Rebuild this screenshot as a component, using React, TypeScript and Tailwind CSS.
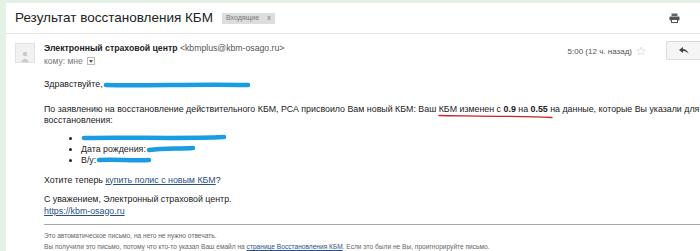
const font = "font-['Liberation_Sans',Arial,sans-serif]";

const Scribble = ({ w, d }: { w: number; d: string }) => (
  <svg width={w} height="8" viewBox={`0 0 ${w} 8`} className="inline-block align-middle">
    <path d={d} stroke="#1a9be2" strokeWidth="4.5" strokeLinecap="round" fill="none" />
  </svg>
);

const PrintIcon = () => (
  <svg width="11" height="10" viewBox="0 0 11 10">
    <rect x="2.5" y="0.5" width="6" height="2.5" fill="#666" />
    <rect x="0.5" y="3.5" width="10" height="4" rx="0.8" fill="#555" />
    <rect x="2.5" y="6.5" width="6" height="3" fill="#fff" stroke="#555" strokeWidth="1" />
  </svg>
);

const App = () => {
  return (
    <div className={`w-[700px] h-[251px] overflow-hidden bg-[#e4f1e6] pl-[6px] pt-[3px] ${font}`}>
      <div className="h-full bg-white">
        <div className="flex h-[31px] items-center border-b border-[#e6e6e6] pl-[9px] pr-[20px]">
          <span className="text-[13.5px] text-[#222]">Результат восстановления КБМ</span>
          <span className="ml-[9px] flex h-[11px] items-center gap-[8px] bg-[#dddddd] px-[4px] text-[7px] text-[#777]">
            Входящие <span className="text-[7px]">x</span>
          </span>
          <span className="ml-auto">
            <PrintIcon />
          </span>
        </div>

        <div className="flex pl-[9px] pt-[9px]">
          <div className="flex h-[20px] w-[20px] shrink-0 items-end justify-center border border-[#e2e2e2] bg-[#f1f1f1]">
            <svg width="10" height="12" viewBox="0 0 10 12">
              <circle cx="5" cy="4" r="2.2" fill="#c9c9c9" />
              <path d="M1.5 12 C1.5 8 8.5 8 8.5 12 Z" fill="#c9c9c9" />
            </svg>
          </div>

          <div className="ml-[9px] min-w-0 flex-1">
            <div className="-mt-[1px] flex items-start">
              <div>
                <div className="text-[8.7px] leading-[12px] text-[#222]">
                  <span className="font-bold">Электронный страховой центр</span>{" "}
                  <span className="text-[#555]">&lt;kbmplus@kbm-osago.ru&gt;</span>
                </div>
                <div className="mt-[1px] flex items-center gap-[4px] text-[8.5px] leading-[12px] text-[#777]">
                  кому: мне
                  <span className="flex h-[8px] w-[8px] items-center justify-center border border-[#bbb] bg-white">
                    <svg width="4" height="3" viewBox="0 0 4 3">
                      <path d="M0 0 H4 L2 3 Z" fill="#555" />
                    </svg>
                  </span>
                </div>
              </div>
              <div className="ml-auto flex shrink-0 items-center">
                <span className="pt-[1px] text-[8px] text-[#555]">5:00 (12 ч. назад)</span>
                <svg width="10" height="10" viewBox="0 0 24 24" className="ml-[4px]">
                  <path
                    d="M12 2.5l2.9 6.4 6.9.6-5.2 4.6 1.6 6.8L12 17.3l-6.2 3.6 1.6-6.8-5.2-4.6 6.9-.6z"
                    fill="none"
                    stroke="#d6d6d6"
                    strokeWidth="1.6"
                  />
                </svg>
                <div className="-mt-[1px] ml-[20px] flex h-[19px] w-[34px] items-center justify-center rounded-l-[2px] border border-r-0 border-[#dcdcdc] bg-[#f5f5f5]">
                  <svg width="10" height="7" viewBox="0 0 10 7">
                    <path d="M4 0 L0 3 L4 6 V4 C6.5 4 8 4.8 9.5 7 C9 4 7 2.2 4 2 Z" fill="#444" />
                  </svg>
                </div>
              </div>
            </div>

            <div className="mt-[12px] text-[8.85px] leading-[11.5px] text-[#222]">
              <p className="flex items-center">
                Здравствуйте,
                <Scribble w={148} d="M3 4 C40 5 90 3 145 4" />
              </p>
              <p className="mt-[13px]">
                По заявлению на восстановление действительного КБМ, РСА присвоило Вам новый КБМ: Ваш{" "}
                <span className="relative">
                  КБМ изменен с <b>0.9</b> на <b>0.55</b>
                  <svg width="116" height="5" viewBox="0 0 116 5" className="absolute -left-[1px] top-[10px]">
                    <path
                      d="M1 1.5 C40 2 80 2.2 114 3.5"
                      stroke="#c4262c"
                      strokeWidth="1.3"
                      fill="none"
                      strokeLinecap="round"
                    />
                  </svg>
                </span>{" "}
                на данные, которые Вы указали для восстановления:
              </p>
              <ul className="mt-[6px] list-disc pl-[37px] leading-[11px]">
                <li>
                  <Scribble w={146} d="M3 4 C50 3 100 5 143 3" />
                </li>
                <li>
                  Дата рождения:
                  <Scribble w={50} d="M3 5 C18 3 32 4 47 3" />
                </li>
                <li>
                  В/у:
                  <Scribble w={56} d="M3 4 C20 3 35 5 53 4" />
                </li>
              </ul>
              <p className="mt-[9px]">
                Хотите теперь <a className="text-[#2a4f86] underline">купить полис с новым КБМ</a>?
              </p>
              <p className="mt-[8px]">С уважением, Электронный страховой центр.</p>
              <a className="text-[#2a4f86] underline">https://kbm-osago.ru</a>
              <div className="mt-[7px] border-t border-[#a8a8a8]" />
              <div className="mt-[5px] text-[6.6px] leading-[11px] text-[#666]">
                <p>Это автоматическое письмо, на него не нужно отвечать.</p>
                <p>
                  Вы получили это письмо, потому что кто-то указал Ваш емайл на{" "}
                  <a className="text-[#2a4f86] underline">страницe Восстановления КБМ</a>. Если это были не Вы,
                  проигнорируйте письмо.
                </p>
              </div>
            </div>
          </div>
        </div>
      </div>
    </div>
  );
};

export default App;
